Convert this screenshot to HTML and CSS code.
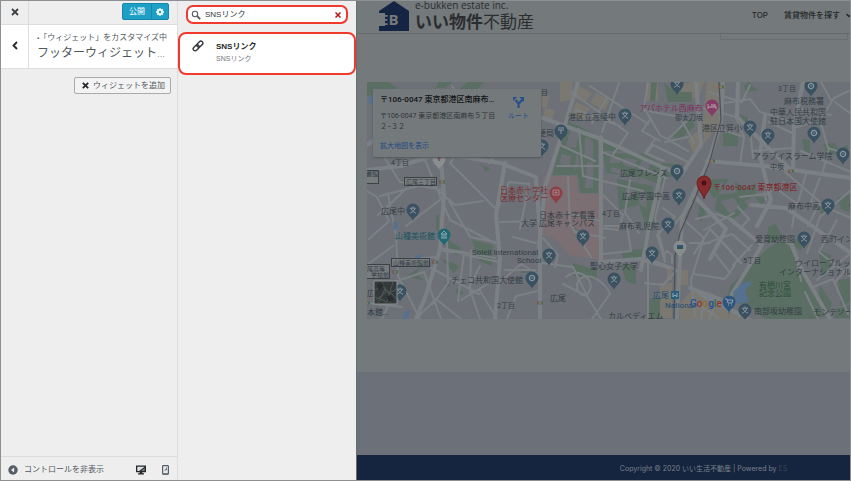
FILE: index.html
```html
<!DOCTYPE html>
<html lang="ja">
<head>
<meta charset="utf-8">
<meta name="viewport" content="width=device-width, initial-scale=1">
<title>フッターウィジェット</title>
<link rel="stylesheet" href="styles.css">
</head>
<body>
<div class="customizer">
  <aside class="controls">
    <header class="controls-top">
      <button class="cell-button" type="button" aria-label="閉じる">
        <svg width="8" height="8" viewBox="0 0 8 8"><path d="M1 1l6 6M7 1L1 7" stroke="#3c4043" stroke-width="1.8"/></svg>
      </button>
      <div class="publish">
        <button class="publish-main" type="button">公開</button>
        <button class="publish-gear" type="button" aria-label="公開設定">
          <svg width="8" height="8" viewBox="0 0 8 8"><circle cx="4" cy="4" r="2.1" fill="none" stroke="#fff" stroke-width="1.6"/><path d="M4 0v1.6M4 6.4V8M0 4h1.6M6.4 4H8M1.2 1.2l1 1M5.8 5.8l1 1M6.8 1.2l-1 1M2.2 5.8l-1 1" stroke="#fff" stroke-width="1.3"/></svg>
        </button>
      </div>
    </header>
    <div class="section-head">
      <button class="cell-button back" type="button" aria-label="戻る">
        <svg width="6" height="9" viewBox="0 0 6 9"><path d="M5 1L1.5 4.5L5 8" fill="none" stroke="#23282d" stroke-width="1.8"/></svg>
      </button>
      <div class="section-text">
        <p class="crumb"><span class="crumb-dot">▪</span>「ウィジェット」をカスタマイズ中</p>
        <h1>フッターウィジェット<span class="more">…</span></h1>
      </div>
    </div>
    <div class="controls-body">
      <button class="add-widget" type="button">
        <svg width="7" height="7" viewBox="0 0 7 7"><path d="M.8.8l5.4 5.4M6.2.8L.8 6.2" stroke="#23282d" stroke-width="1.8"/></svg>
        ウィジェットを追加
      </button>
    </div>
    <footer class="controls-foot">
      <button class="collapse" type="button">
        <svg width="10" height="10" viewBox="0 0 10 10"><circle cx="5" cy="5" r="4.7" fill="#555d66"/><path d="M6.2 2.6v4.8L3 5z" fill="#eee"/></svg>
        コントロールを非表示
      </button>
      <div class="devices">
        <button type="button" aria-label="デスクトップ">
          <svg width="10" height="10" viewBox="0 0 10 10"><path d="M0 .5h10v6.7H6.3v1H8v1.3H2V8.200h1.700v-1H0z" fill="#23282d"/><path d="M1.300 1.700h7.400L3 6H1.300z" fill="#dfe2e4"/><path d="M8.700 3v3H5z" fill="#747b82"/></svg>
        </button>
        <button type="button" aria-label="モバイル">
          <svg width="7" height="10" viewBox="0 0 7 10"><rect x=".6" y=".6" width="5.800" height="8.800" rx=".8" fill="#e8e9ea" stroke="#555d66" stroke-width="1.200"/><path d="M5 2v3L2 6zM1 8h5v1.400H1z" fill="#747b82"/></svg>
        </button>
      </div>
    </footer>
  </aside>

  <section class="picker">
    <div class="search">
      <svg width="10" height="10" viewBox="0 0 10 10"><circle cx="4" cy="4" r="2.700" fill="none" stroke="#555d66" stroke-width="1.100"/><path d="M6 6l3.200 3.200" stroke="#555d66" stroke-width="1.800"/></svg>
      <input type="text" value="SNSリンク" aria-label="ウィジェットを検索">
      <button type="button" aria-label="検索結果をクリア">
        <svg width="6" height="6" viewBox="0 0 6 6"><path d="M.5.5l5 5M5.500.5l-5 5" stroke="#b81414" stroke-width="1.500"/></svg>
      </button>
    </div>
    <button class="result" type="button">
      <svg width="12" height="12" viewBox="0 0 12 12"><g fill="none" stroke="#32373c" stroke-width="1.400" transform="rotate(-45 6 6)"><rect x="0" y="4" width="6.800" height="4" rx="2"/><rect x="5.200" y="4" width="6.800" height="4" rx="2"/></g></svg>
      <span class="result-text"><strong>SNSリンク</strong><span>SNSリンク</span></span>
    </button>
  </section>

  <main class="preview">
    <header class="site-head">
      <a class="brand" href="#">
        <svg width="34" height="31" viewBox="0 0 34 31"><path d="M0 10L15 0l15 10v20H0V24h6V13H0z" fill="#152442"/><path d="M0 12h6v2H2v3h4v2H2v4h4v2H0z" fill="#74797b"/></svg>
        <span class="brand-mark">EB</span>
        <span class="brand-text"><span class="brand-en">e-bukken estate inc.</span><span class="brand-ja"><b>いい物件</b>不動産</span></span>
      </a>
      <nav class="site-nav">
        <a href="#">TOP</a>
        <a href="#">賃貸物件を探す</a>
        <svg width="6" height="5" viewBox="0 0 6 5"><path d="M.5 1L3 3.500L5.500 1" fill="none" stroke="#24272a" stroke-width="1.500"/></svg>
      </nav>
    </header>
    <div class="stub-row"><div class="stub"></div></div>

    <div class="map">
      <svg class="map-art" viewBox="367 82 484 237" preserveAspectRatio="xMinYMin slice">
        <defs>
          <g id="pin"><path d="M0 11C-1 7-6.500 5-6.500 0a6.500 6.500 0 0 1 13 0C6.500 5 1 7 0 11z"/></g>
          <g id="school"><use href="#pin" fill="#395160"/><path d="M0-3.500v1.500M-3.200-1.800h6.400M-2-1.500C-1 1 1 2.500 3 3.200M2-1.500C1 1-1 2.500-3 3.200" fill="none" stroke="#8b979e"/></g>
          <g id="place"><use href="#pin" fill="#395160"/><circle r="2.600" fill="none" stroke="#8b979e" stroke-width="1.300"/><circle r=".8" fill="#8b979e"/></g>
          <g id="light"><rect x="-3" y="-1.500" width="6" height="3" fill="#5b6063"/><circle cx="-1.800" r="1" fill="#915252"/><circle r="1" fill="#8d884e"/><circle cx="1.800" r="1" fill="#43735c"/></g>
        </defs>
        <rect x="367" y="82" width="484" height="237" fill="#6d7177"/>
        <g fill="#7a7871">
          <path d="M560 82h13l-2 18-11 2zM577 85l15 8-7 10-12-6zM576 102l14 6-6 12-13-5zM596 93l14 7-5 10-15-7zM690 82h14l-4 12-12 4zM707 82h14l2 37-18 24-3-18zM646 83h12v18h-12zM681 83h14v15h-14zM688 140l10-10 7 12-12 10z"/>
          <path d="M677 270h11v15h-11zM690 292h20l18 10v17h-48v-15zM541 92l9 4-4 12-8-2zM660 283h12v35h-12zM545 108l10 2-4 12-8-2zM731 308l18 7-3 4h-18zM667 268h5v12h-5z"/>
        </g>
        <path d="M543 176h34l1 18h22v66l-30-5-18-19h-12z" fill="#7c6f73"/>
        <g fill="#5a6e63">
          <path d="M367 82h22l8 6-14 8h-16zM438 82h14l-6 6h-10zM456 91h20l8-9h-16zM500 122l10 3-2 6-9-3z"/>
          <path d="M568 121l15 7 15 9v56h-18l-2-18h-25l3-16zM603 137l24 14h-24zM603 153l42 1 22 14-5 18-18-8-38-5zM617 179l36 7 2 34-12 38h-21v-7l20-2 5-20-8-24-20 5zM651 83h6l-2 18h-5zM664 83l12 9h16v10h-24zM671 134l20-16 4 8-17 15zM662 163l22 2-7 10-14 4zM723 133h15v13h-15zM744 86l6-5 3 6 6 3-13 2zM739 114l9 4 6 9-8-2zM802 139l8 1v14l-6-3zM823 144l12-1 3 6 10-4v10l-21-1zM712 179h17l-5 8-10 12-5-8zM734 181l12 8 10-6v12l-16 9zM755 196l12 3-6 6zM717 195l22-3 9 15-16 13-17-10zM700 201l8 8-7 13-3-6z"/>
          <path d="M573 263l24 7v10l-24-4zM621 265h15v20l-10-4zM648 298h12v20h-12zM575 227l6 6-6 3zM472 240l21 5-1 21-13-5zM447 239l14 9-4 7-11-6zM440 258l20 8-6 7zM521 269h15v4h-15zM406 277l17-12-7 9 8 6zM436 215h3v17l-3-3zM481 165l9 3-4 4zM455 288l9 5-6 3zM445 281l6 4-4 3z"/>
          <path d="M727 298l3-12 20-20 17-17 13-8 12 4 8 14 8 26 20 30-14 4h-49l-12-10zM768 227l8-3 7 14-16 6zM837 198l14-4v19l-10-4zM819 250l12 5v15l-10 9zM820 285l12 18-4 13-11-16zM838 280l13-2v24l-10 4zM836 309l15-4v13h-17zM820 228l7 5-3 1zM817 202h10l4 10-9 4zM793 244l4-6 8 5-5 8z"/>
        </g>
        <g fill="#6d7177">
          <path d="M570 130l9 3-3 15-10-1zM585 137l8 4v17h-9zM561 154l10 2-1 10-10-2zM577 151l3 12-6 9zM587 162h6v26h-8zM610 158h10v5h-10zM625 158l12 2-3 8-12-4zM642 160l9 3-5 10-8-3zM612 167l13 4-3 4-12-4zM626 187l8 2v8l-9-2zM640 192l8 2-2 14-7-4zM720 201l14-3 6 9-10 7zM719 184l5-2-5 9zM667 166l8 2-6 6z"/>
        </g>
        <g fill="none" stroke="#7b8084" stroke-linejoin="round" stroke-linecap="round">
          <g stroke-width="4">
            <path d="M540 117l61 22 61 28 18 7M578 82l-13 43-20 62-6 60M601 137v125M367 170l34-4 39-13 60 10 36 14M441 160l3 36-4 53-14 46-10 24M505 163l-9 52 4 44-5 60M536 180l4 50v89M662 168l-13 60-8 42M723 82l-2 40-12 38-27 58-5 101M707 161l58 5 86 12M793 170l1-43 9-45M600 262l40-3 28 8M783 240l8 4 12 28 27 47"/>
            <path d="M367 145l30-20M693 195l33 34-16 30M730 219l32 26-35 57-37-14M700 294l50 26M681 175l20-30-5-63M738 82l-1 35 54 53M751 205l35 3 65 45M765 116l-5 40 11 44-14 26"/>
          </g>
          <g stroke-width="2">
            <path d="M369 239l20-18-12-24-10-6M388 194l8 42 2 40 22 43M367 265l26-19M380 196l50-13 25 22 28-4M395 260l42-3M384 157l16 25 42 8M401 166l20-24M425 160l25 60 45 23M450 163l45 45M449 201l21 36 30 6M440 248l55 10M447 238l1 45-15 21M431 268l48 26M443 251l21 2-6 48M466 255l33 7M471 250l-1 45 28-18M394 282l30-10 17 47M461 300l18-11 18 30M500 222l42-1M497 210l12-28 20 2-9 45M513 237l23 6M505 270h31M500 282l21-18 17 10M507 319l9-23 22-5M367 303l35 4M398 283l-16 36M451 163l21-47-20-30M489 163l26-37M441 199l-35 27M378 215l28-26M416 319l20-20 25 20M480 266l-11 21 11 32"/>
            <path d="M571 92l57 41-16 23M576 110l44 16M590 86l58 38M619 83l-17 49M607 98l-15 25M648 82l-4 26 16 27 28 16M643 110l37 7 14 26M651 118l-9 13 18 10M655 139l-10 14 19 8M669 138l19-18M665 142l23-5M646 154l7-9 35 17M579 129l4 47 16 4M560 145l35 16M557 166h43M568 177l2 47 21 33M602 152l65 26M603 181l40 10M603 195l20 20-5 15-17-2M605 226h22l4 25-27 3M630 180l-5 33 14 20M665 178l-10 40 10 40M663 208l12 9-18 18 7 23M670 230l22-27M682 218l22 20-13 42 4 36M690 243h20M648 256v62M657 262l20 8-14 15-18-2M665 262l-2-7 4-4 5 4v8M542 263l31 4 15 31M543 238l15 17-3 12M566 277c14-12 30 4 23 15s-17-6-9-13 24 1 30 15l-18 25M563 284l24 12 14 23M574 231l31 7M569 213l32 8"/>
            <path d="M709 92l33 10 8-17M704 108l32 9M725 103l25-4 10 13 37 11M720 129l24 8-4 27M744 137l-8-19M749 120l4 38M769 122l25 12M753 151l40-3M801 151l50 21M794 128l26-8 14-22 17-8M821 82l10 18M820 120l8 28 23 7M800 109l31 6M829 148l-6 23M835 102l16 12M696 219l21-5 15 6M704 230l30-17M694 254l16-25 21 22M710 229l31 34M704 244l28-10M732 234l18 16M694 274l31 5 10-14M714 252l16 21M738 207l11 12-9 10M740 197l27-3 17-12M766 200l-3-16M774 187l22 16-4 24M785 172l35 30-12 24M806 174l-9 32M820 178l-9 23 40 17M851 190l-31 27-13 36M837 220l-18 32 32 25M817 280l34-27M813 287l20-8 15 35M835 282l16-17M805 292l13 27M793 244l8 37M733 265l19-20M693 300l25 18M705 297l-4 22M716 302l-7 17"/>
          </g>
        </g>
        <g fill="#55718f"><path d="M733 292l10-9 10-2-8 10 4 11-12 2zM369 97l7-3v10h-7zM393 222l4-1 1 8-4 1zM405 312l6-2-4 9h-5zM415 256l6-2v4h-6z"/></g>
        <path d="M719 82l2 38-11 41-14 35-16 37-5 23-1 63" fill="none" stroke="#4c5053" stroke-width="1.200"/>
        <g>
          <use href="#light" x="721" y="87"/><use href="#light" x="712" y="161"/><use href="#light" x="791" y="171"/><use href="#light" x="442" y="182"/><use href="#light" x="435" y="262"/><use href="#light" x="395" y="272"/><use href="#light" x="540" y="303"/><use href="#light" x="367" y="303"/>
        </g>
        <g stroke="#3c4145" fill="#777c7e"><rect x="404.500" y="177.500" width="32" height="8"/><rect x="391.500" y="258.500" width="38" height="8"/><rect x="357.500" y="170.500" width="21" height="13"/><rect x="357.500" y="264.500" width="32" height="14"/></g>
        <g>
          <use href="#school" x="625" y="115"/><use href="#school" x="677" y="84"/><use href="#school" x="750" y="127"/><use href="#school" x="768" y="135"/><use href="#school" x="413" y="210"/><use href="#school" x="583" y="236"/><use href="#school" x="549" y="255"/><use href="#school" x="668" y="224"/><use href="#school" x="652" y="253"/><use href="#school" x="614" y="279"/><use href="#school" x="679" y="195"/><use href="#school" x="828" y="205"/><use href="#school" x="804" y="238"/><use href="#school" x="745" y="310"/><use href="#school" x="400" y="291"/><use href="#school" x="542" y="146"/>
          <use href="#place" x="811" y="86"/><use href="#place" x="814" y="133"/><use href="#place" x="843" y="154"/><use href="#place" x="532" y="278"/><use href="#place" x="677" y="171"/>
          <g transform="translate(561 131)"><use href="#pin" fill="#395160"/><path d="M-3-3h6M-3-1h6M0-1v4" stroke="#8b979e" fill="none"/></g>
          <g transform="translate(444 235)"><use href="#pin" fill="#216872"/><path d="M-3-1l3-3 3 3zM-3 3h6M-2-1v4M0-1v4M2-1v4" stroke="#8ba4a7" fill="none"/></g>
          <g transform="translate(556 193)"><use href="#pin" fill="#8b4048"/><path d="M-3-3h6v5h-6zM0-2v3M-1.500-.5h3" stroke="#a18487" fill="none"/></g>
          <g transform="translate(712 106)"><use href="#pin" fill="#863c67"/><path d="M-4-2v5M-4 1h8v2M-1-1h4v2" stroke="#a48b9b" stroke-width="1.300" fill="none"/></g>
          <g transform="translate(729 302)"><use href="#pin" fill="#2e557e"/><path d="M-4-3h2l1 4h4l1-3h-5M-1 3h1M2 3h1" stroke="#94a3b1" fill="none"/></g>
          <g transform="translate(439 159)"><use href="#pin" fill="#8a8e90"/><path d="M0-3v5M-2-1h4" stroke="#703030" fill="none"/></g>
          <g transform="translate(680 247)"><use href="#pin" fill="#868b8d"/><path d="M-3-2h6v4h-6z" fill="#2e594a"/><path d="M-3-2h6v1.500h-6z" fill="#35518b"/></g>
          <path d="M704 199c-1-6-7-9-7-16a7 7 0 0 1 14 0c0 7-6 10-7 16z" fill="#872a2b" stroke="#6a2023"/><circle cx="704" cy="183" r="2.500" fill="#451417"/>
        </g>
        <rect x="671" y="291" width="8" height="8" fill="#285e80"/><path d="M673 293v4l2-2 2 2v-4" fill="none" stroke="#9ba9b2"/>
        <g class="label">
          <text x="568" y="120">港区立高陵中</text><text x="702" y="131">港区立笄小</text><text x="784" y="104">麻布税務署</text><text x="770" y="115">中華人民共和国</text><text x="770" y="124">駐日本国大使館</text><text x="753" y="159">アラブイスラーム学院</text><text x="620" y="176">広尾フレンズ</text><text x="622" y="199">広尾学園中高</text><text x="381" y="214">広尾中</text><text x="539" y="218">日本赤十字看護</text><text x="521" y="226">大学 広尾キャンパス</text><text x="619" y="229">麻布乳児院</text><text x="590" y="269">聖心女子大学</text><text x="788" y="209">麻布中高</text><text x="755" y="242">愛育幼稚園</text><text x="821" y="242">西町インターナショナル</text><text x="795" y="266">ウイローブルック</text><text x="779" y="275">インターナショナル</text><text x="754" y="314">南部坂幼稚園</text><text x="813" y="315">モンテソーリ</text><text x="608" y="319">カルベディエム</text><text x="451" y="283">チェコ共和国大使館</text><text x="472" y="255">Soleil International</text><text x="517" y="263">School</text><text x="550" y="301">広尾</text><text x="367" y="296">広</text><text x="367" y="315">本館…</text><text x="538" y="136">便局</text><text x="849" y="209">分</text>
        </g>
        <g class="label small"><text x="778" y="91">3丁目</text><text x="391" y="165">4丁目</text><text x="602" y="216">4丁目</text><text x="743" y="263">5丁目</text><text x="497" y="308">2丁目</text><text x="541" y="95">目</text><text x="675" y="120">御太刀坂</text><text x="770" y="169">中坂</text></g>
        <g class="label boxed"><text x="406" y="184">広尾三丁目</text><text x="393" y="265">山種美術館前</text><text x="366" y="176">書館</text><text x="367" y="271">尾高等</text><text x="371" y="277">学校前</text></g>
        <g class="label pink"><text x="639" y="111">アパホテル西麻布</text></g>
        <g class="label red"><text x="500" y="193">日本赤十字社</text><text x="500" y="201">医療センター</text><text class="target" x="713" y="190">〒106-0047 東京都港区</text></g>
        <g class="label teal"><text x="395" y="239">山種美術館</text></g>
        <g class="label green"><text x="759" y="288">有栖川宮</text><text x="759" y="296">記念公園</text></g>
        <g class="label blue"><text x="653" y="298">広尾</text><text x="665" y="308">National</text></g>
        <text class="google" x="690" y="307"><tspan fill="#244f98">G</tspan><tspan fill="#933531">o</tspan><tspan fill="#8c7425">o</tspan><tspan fill="#244f98">g</tspan><tspan fill="#2c7044">l</tspan><tspan fill="#933531">e</tspan></text>
        <g><rect x="374" y="281" width="23" height="23" fill="#343a3b" stroke="#8b8f91"/><path d="M375 290l8-4 6 8 7-5M378 303l7-14 11 9M375 297l12 5 6-20M382 282l4 10-10 8M390 303l3-9" stroke="#515755" fill="none"/><path d="M377 285l4-3 3 4-5 5zM386 296l6-1 2 5-5 2z" fill="#292f30"/></g>
      </svg>
      <div class="place-card">
        <div class="place-info">
          <strong>〒106-0047 東京都港区南麻布…</strong>
          <p>〒106-0047 東京都港区南麻布５丁目２−３２</p>
          <a href="#">拡大地図を表示</a>
        </div>
        <a class="route" href="#">
          <svg width="12" height="12" viewBox="0 0 12 12"><path d="M5.500 12V7.500L2.500 4M5.500 8l4-4.500" fill="none" stroke="#2a4f8c" stroke-width="2.200"/><path d="M6.500 1H11v5zM0 1h4L0 5z" fill="#2a4f8c"/></svg>
          ルート
        </a>
      </div>
    </div>
    <div class="band"></div>
    <footer class="site-foot"><small>Copyright © 2020 いい生活不動産 | Powered by <a href="#">ES</a></small></footer>
  </main>
</div>
</body>
</html>
```

FILE: styles.css
```css
* { box-sizing: border-box; }

body {
  margin: 0;
  font-family: "Liberation Sans", "Noto Sans CJK JP", sans-serif;
  font-size: 8px;
  line-height: 12px;
  color: #50575e;
}

button {
  margin: 0;
  padding: 0;
  border: 0;
  background: none;
  font: inherit;
  color: inherit;
}

a { color: inherit; text-decoration: none; }
p, h1 { margin: 0; font-weight: 400; }
svg { display: block; flex: none; }

.customizer {
  display: grid;
  grid-template-columns: 177fr 178fr 494fr;
  min-height: 100vh;
  border: 1px solid #8d9092;
}

/* Controls column */
.controls {
  display: flex;
  flex-direction: column;
  min-width: 0;
  background: #eee;
  border-right: 1px solid #ddd;
}

.controls-top {
  display: flex;
  justify-content: space-between;
  height: 24px;
  border-bottom: 1px solid #ddd;
}

.cell-button {
  display: flex;
  flex: none;
  align-items: center;
  justify-content: center;
  width: 28px;
  padding-bottom: 2px;
  border-right: 1px solid #ddd;
}

.publish {
  display: flex;
  height: 17px;
  margin: 2px 8px 0 0;
  border: 1px solid #1787a9;
  border-radius: 2px;
  background: #1e9fc6;
  color: #fff;
}

.publish-main { width: 29px; border-right: 1px solid #1787a9; }

.publish-gear {
  display: flex;
  align-items: center;
  justify-content: center;
  width: 16px;
}

.section-head {
  display: flex;
  height: 44px;
  background: #fff;
  border-bottom: 1px solid #ddd;
}

.section-text {
  min-width: 0;
  padding: 7px 0 0 8px;
  overflow: hidden;
  white-space: nowrap;
}

.crumb-dot { font-size: 6px; }

h1 {
  font-size: 12px;
  line-height: 18px;
}

.more { font-size: 8px; }

.controls-body {
  display: flex;
  flex: 1;
  align-items: flex-start;
  justify-content: flex-end;
  padding: 8px 6px;
}

.add-widget {
  display: flex;
  align-items: center;
  gap: 4px;
  height: 17px;
  padding: 0 5px 0 7px;
  border: 1px solid #aaa;
  border-radius: 2px;
  background: #f3f3f3;
}

.controls-foot {
  display: flex;
  align-items: center;
  justify-content: space-between;
  height: 24px;
  padding: 2px 8px 0 7px;
  border-top: 1px solid #ddd;
}

.collapse { display: flex; align-items: center; gap: 6px; }
.devices { display: flex; gap: 16px; }

/* Widget picker */
.picker { background: #eee; }

.search {
  display: flex;
  align-items: center;
  gap: 4px;
  height: 19px;
  margin: 4px 8px 8px;
  padding: 0 5px 0 3px;
  border: 2px solid #f03a2d;
  border-radius: 7px;
  background: #fff;
}

.search input {
  flex: 1;
  min-width: 0;
  padding: 0;
  border: 0;
  outline: 0;
  background: none;
  font: inherit;
  color: #32373c;
}

.result {
  display: flex;
  gap: 12px;
  width: 100%;
  height: 43px;
  padding: 6px 12px;
  border: 2px solid #f03a2d;
  border-radius: 8px;
  background: #fff;
  text-align: left;
}

.result-text { display: flex; flex-direction: column; }
.result strong { line-height: 13px; color: #23282d; }
.result-text span { font-size: 7px; color: #72777c; }

/* Site preview, dimmed behind the picker */
.preview {
  display: flex;
  flex-direction: column;
  min-width: 0;
  overflow: hidden;
  background: #74797b;
  border-left: 1px solid #686d6f;
}

.site-head {
  display: flex;
  justify-content: space-between;
  height: 33px;
  padding-left: 22px;
  border-bottom: 1px solid #656a6c;
  color: #24272a;
}

.brand { display: flex; position: relative; gap: 2px; }

.brand-mark {
  position: absolute;
  top: 10px;
  left: 1px;
  font: 700 15px/16px "Open Sans", sans-serif;
  color: #74797b;
}

.brand-text {
  display: flex;
  flex-direction: column;
  font-family: "Open Sans", "Noto Sans CJK JP", sans-serif;
  color: #2b2e30;
}

.brand-en { font-size: 10px; line-height: 9px; }
.brand-ja { font-size: 17px; line-height: 23px; }

.site-nav {
  display: flex;
  align-items: center;
  gap: 16px;
  margin-right: -2px;
  padding-bottom: 4px;
  font-family: Inter, "Noto Sans CJK JP", sans-serif;
  font-weight: 500;
}

.site-nav svg { margin-left: -10px; }

.stub-row { height: 48px; }

.stub {
  width: 26%;
  height: 6px;
  margin: 0 2px 0 auto;
  border: 1px solid #6a6f71;
  border-top: 0;
  border-radius: 0 0 2px 2px;
}

.map {
  position: relative;
  height: 237px;
  margin-left: 10px;
}

.map-art { width: 100%; height: 100%; }

.label {
  font: 8px Roboto, "Noto Sans CJK JP", sans-serif;
  fill: #343d45;
}

.small { font-size: 7px; }
.boxed { font-size: 6px; }
.pink { fill: #7c2e5e; }
.red { fill: #7b2c31; }
.target { font-weight: 500; }
.teal { fill: #17545e; }
.green { fill: #2c4c38; }
.blue { fill: #234c70; }
.google { font: 500 10px Roboto, sans-serif; }

.place-card {
  position: absolute;
  top: 7px;
  left: 6px;
  display: flex;
  gap: 8px;
  width: 168px;
  height: 68px;
  padding: 5px 7px;
  border-radius: 1px;
  background: #74797b;
  box-shadow: 0 1px 2px #505558;
  font: 7px/11px Roboto, "Noto Sans CJK JP", sans-serif;
  color: #30353a;
}

.place-info { width: 120px; }

.place-info strong {
  display: block;
  margin-bottom: 5px;
  font-size: 8px;
  font-weight: 500;
  line-height: 12px;
  white-space: nowrap;
  color: #121416;
}

.place-info p { margin-bottom: 8px; }
.place-card a { color: #234b85; }

.route {
  display: flex;
  flex-direction: column;
  align-items: center;
  gap: 3px;
  padding-top: 2px;
}

.band {
  flex: 1;
  margin-top: 53px;
  background: #6c7078;
}

.site-foot {
  display: flex;
  align-items: center;
  justify-content: center;
  height: 25px;
  padding: 2px 0 0 200px;
  background: #15243f;
  color: #7c828b;
}

.site-foot small {
  font: 7px/10px Inter, "Noto Sans CJK JP", sans-serif;
}

.site-foot a { color: #3a4454; }
```
